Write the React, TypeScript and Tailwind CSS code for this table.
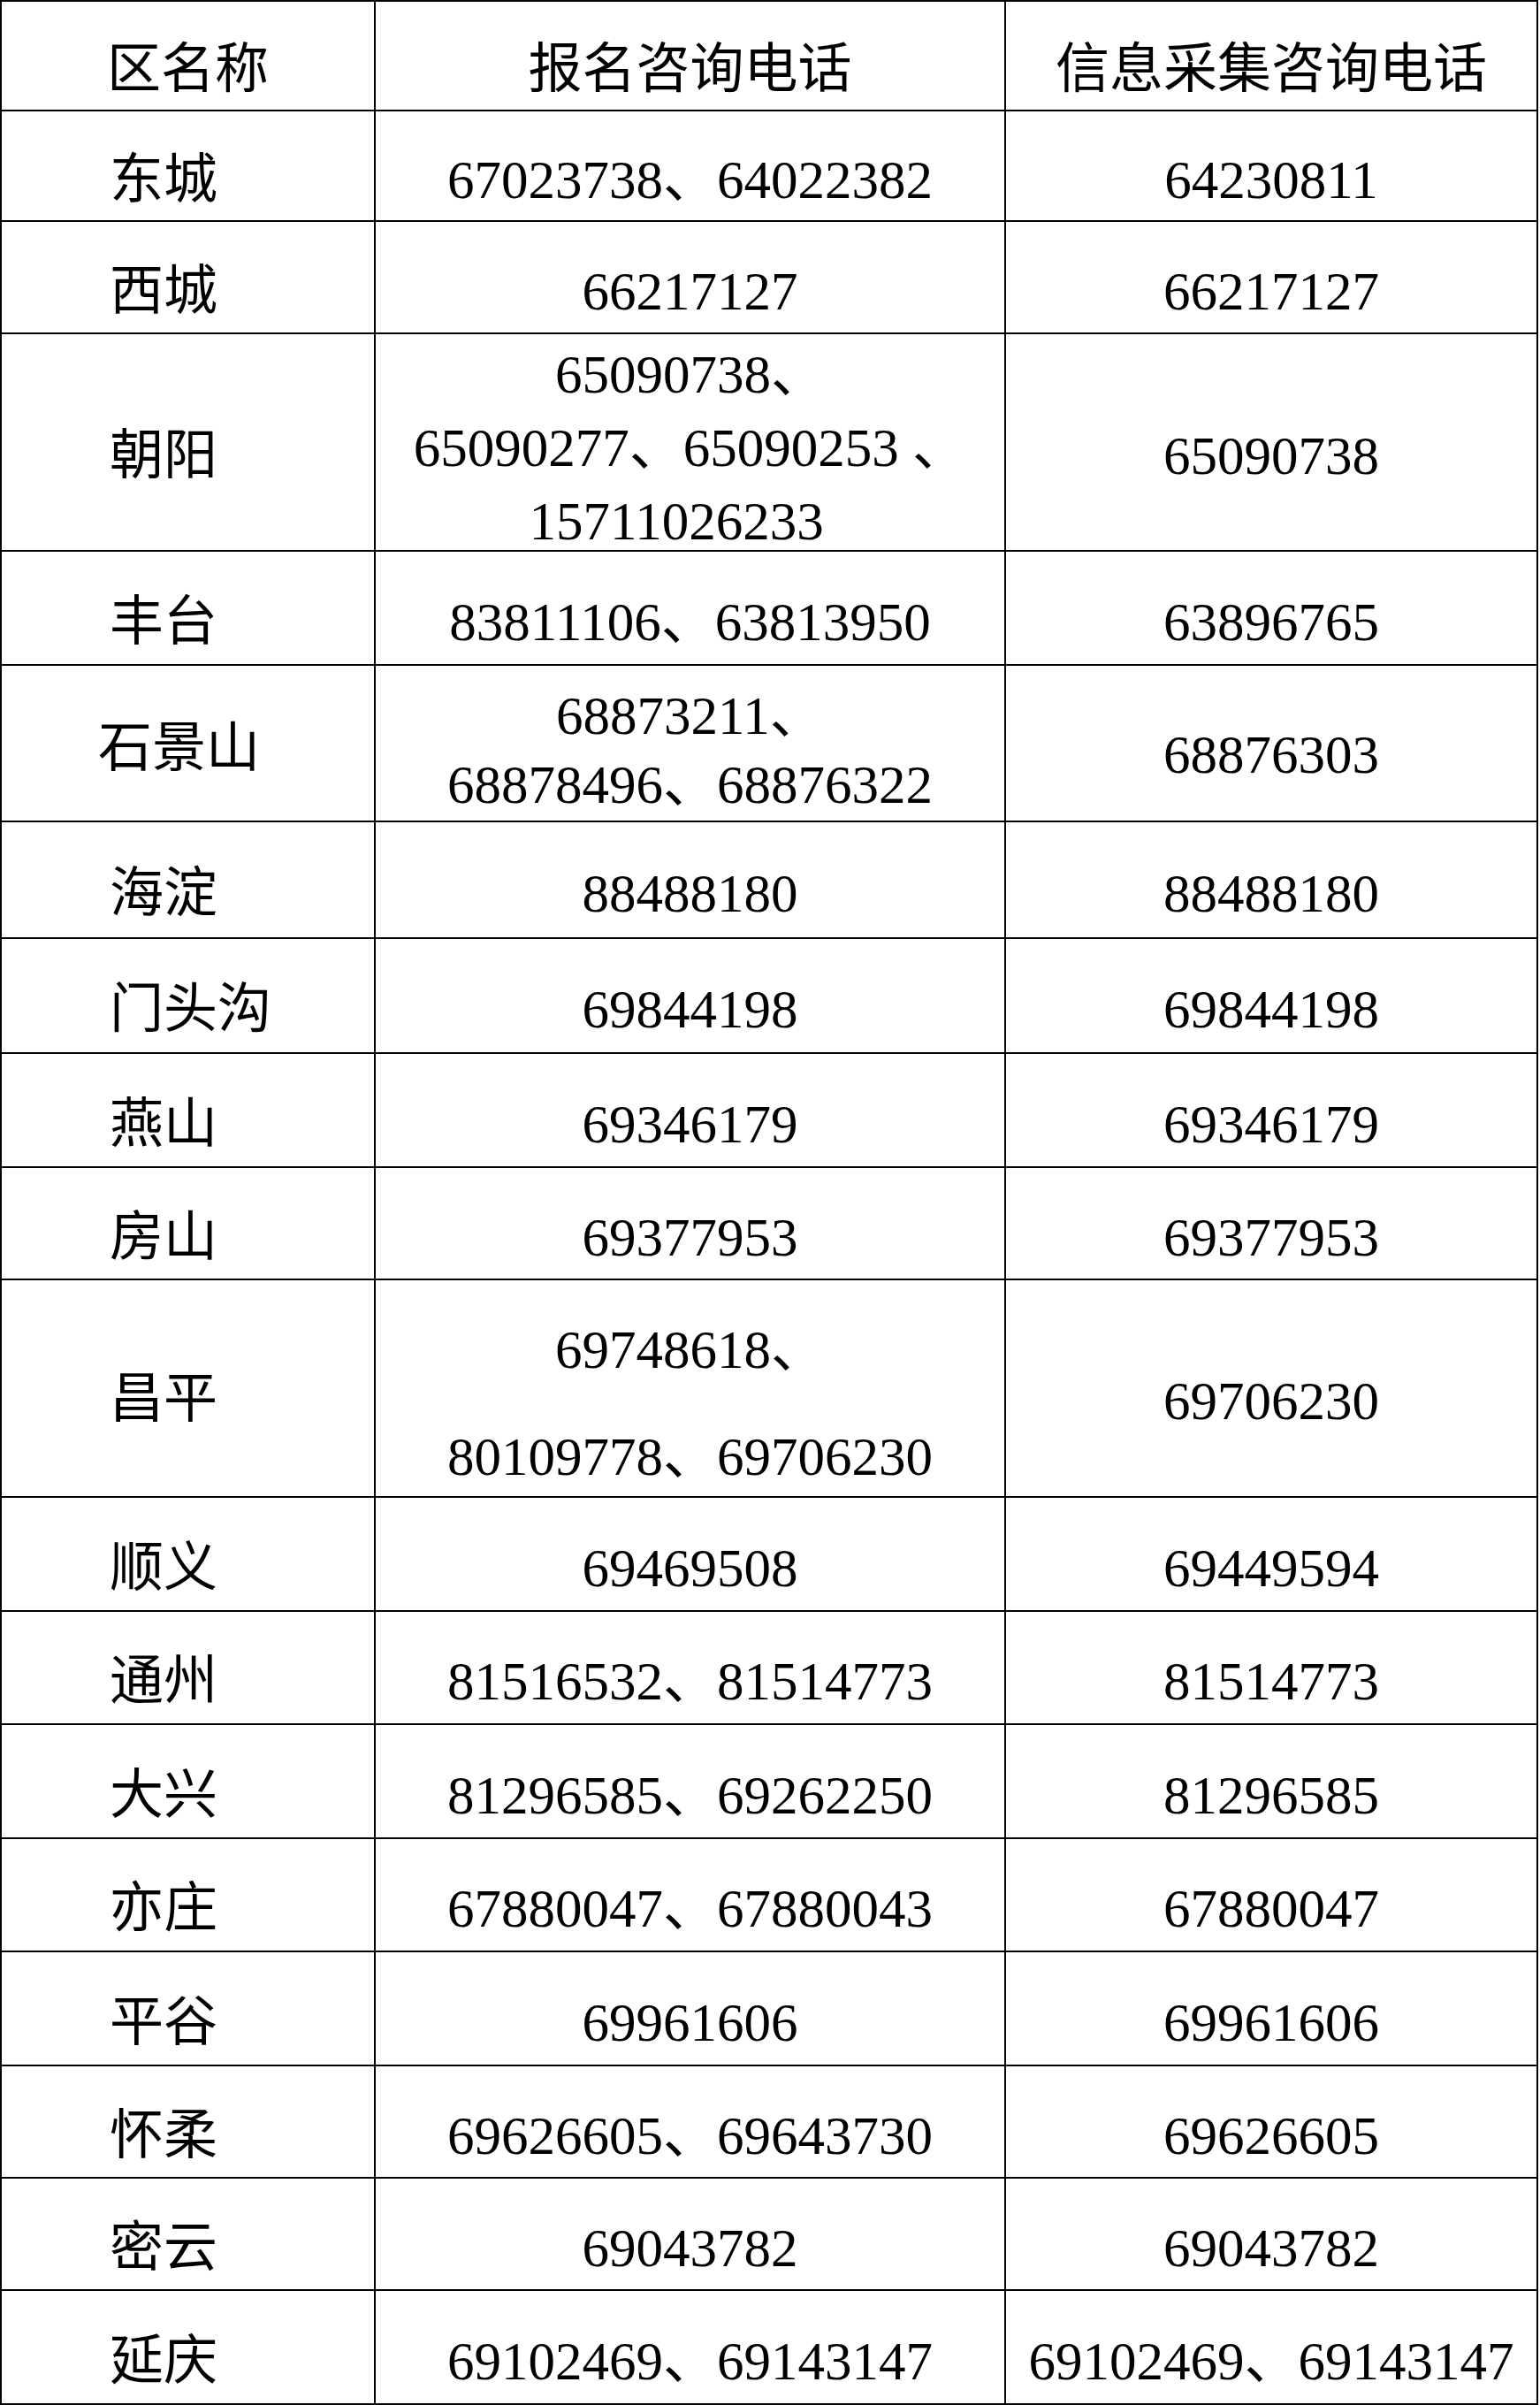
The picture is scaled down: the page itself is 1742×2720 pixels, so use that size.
type Row = {
  name: string;
  reg: string[];
  info: string[];
  h: string;
  lead?: string;
  namePad?: string;
  namePt?: string;
  regPt?: string;
  infoPt?: string;
};

// row track heights match the ruled lines of the scanned table
const rows: Row[] = [
  { name: '东城', reg: ['67023738、64022382'], info: ['64230811'], h: 'grid-rows-[125px]' },
  { name: '西城', reg: ['66217127'], info: ['66217127'], h: 'grid-rows-[127px]' },
  {
    name: '朝阳',
    reg: ['65090738、', '65090277、65090253 、', '15711026233  '],
    info: ['65090738'],
    h: 'grid-rows-[246px]',
    lead: 'leading-[83px]',
    regPt: 'pt-3',
  },
  { name: '丰台', reg: ['83811106、63813950'], info: ['63896765'], h: 'grid-rows-[129px]' },
  {
    name: '石景山',
    reg: ['68873211、', '68878496、68876322'],
    info: ['68876303'],
    h: 'grid-rows-[177px]',
    lead: 'leading-[78px]',
    namePad: 'pl-[109px]',
    namePt: 'pt-[13px]',
    regPt: 'pt-[17px]',
    infoPt: 'pt-[27px]',
  },
  { name: '海淀', reg: ['88488180'], info: ['88488180'], h: 'grid-rows-[132px]' },
  { name: '门头沟', reg: ['69844198'], info: ['69844198'], h: 'grid-rows-[130px]' },
  { name: '燕山', reg: ['69346179'], info: ['69346179'], h: 'grid-rows-[129px]' },
  { name: '房山', reg: ['69377953'], info: ['69377953'], h: 'grid-rows-[127px]' },
  {
    name: '昌平',
    reg: ['69748618、', '80109778、69706230'],
    info: ['69706230'],
    h: 'grid-rows-[246px]',
    lead: 'leading-[121px]',
    namePt: 'pt-[26px]',
    regPt: 'pt-[34px]',
    infoPt: 'pt-[30px]',
  },
  { name: '顺义', reg: ['69469508'], info: ['69449594'], h: 'grid-rows-[129px]' },
  { name: '通州', reg: ['81516532、81514773'], info: ['81514773'], h: 'grid-rows-[128px]' },
  { name: '大兴', reg: ['81296585、69262250'], info: ['81296585'], h: 'grid-rows-[129px]' },
  { name: '亦庄', reg: ['67880047、67880043'], info: ['67880047'], h: 'grid-rows-[128px]' },
  { name: '平谷', reg: ['69961606'], info: ['69961606'], h: 'grid-rows-[129px]' },
  { name: '怀柔', reg: ['69626605、69643730'], info: ['69626605'], h: 'grid-rows-[127px]' },
  { name: '密云', reg: ['69043782'], info: ['69043782'], h: 'grid-rows-[127px]' },
  { name: '延庆', reg: ['69102469、69143147'], info: ['69102469、69143147'], h: 'grid-rows-[129px]' },
];

const font = 'font-["Liberation_Serif","Noto_Sans_CJK_SC",serif]';

function Lines({ lines, lead }: { lines: string[]; lead?: string }) {
  return (
    <div className={`text-center whitespace-pre ${lead ?? 'leading-[1.2]'}`}>
      {lines.map((l, i) => (
        <div key={i}>{l}</div>
      ))}
    </div>
  );
}

export default function App() {
  return (
    <div className={`bg-white text-black ${font} text-[61px]`}>
      <div className="w-[1740px] border-t-2 border-l-2 border-black">
        <div className="grid grid-cols-[423px_713px_602px] grid-rows-[124px]">
          <div className="flex items-center justify-center pt-8 border-r-2 border-b-2 border-black leading-[1.2]">
            区名称
          </div>
          <div className="flex items-center justify-center pt-8 border-r-2 border-b-2 border-black leading-[1.2]">
            报名咨询电话
          </div>
          <div className="flex items-center justify-center pt-8 border-r-2 border-b-2 border-black leading-[1.2]">
            信息采集咨询电话
          </div>
        </div>
        {rows.map((r) => (
          <div key={r.name} className={`grid grid-cols-[423px_713px_602px] ${r.h}`}>
            <div
              className={`flex items-center border-r-2 border-b-2 border-black leading-[1.2] ${r.namePad ?? 'pl-[122px]'} ${r.namePt ?? 'pt-8'}`}
            >
              {r.name}
            </div>
            <div
              className={`flex items-center justify-center border-r-2 border-b-2 border-black ${r.regPt ?? 'pt-8'}`}
            >
              <Lines lines={r.reg} lead={r.lead} />
            </div>
            <div
              className={`flex items-center justify-center border-r-2 border-b-2 border-black ${r.infoPt ?? 'pt-8'}`}
            >
              <Lines lines={r.info} />
            </div>
          </div>
        ))}
      </div>
    </div>
  );
}
